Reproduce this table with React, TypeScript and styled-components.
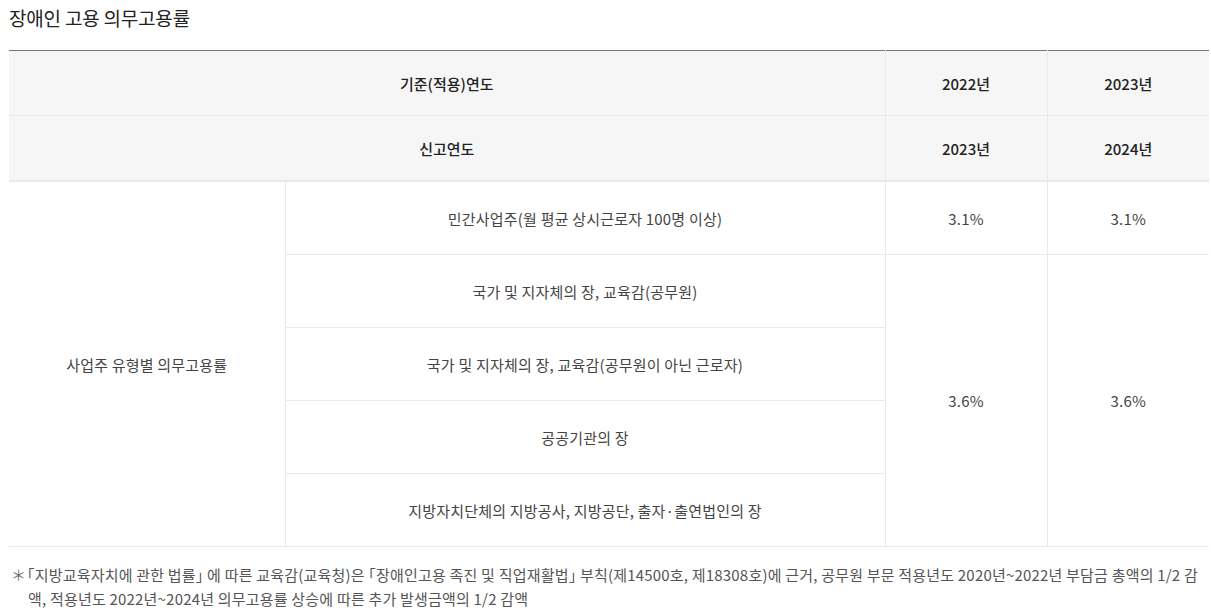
import React from "react";
import styled, { createGlobalStyle } from "styled-components";

const Global = createGlobalStyle`
  html, body { margin: 0; padding: 0; background: #fff; }
  body { font-family: "Noto Sans CJK KR", "Noto Sans", sans-serif; color: #222; }
`;

const Page = styled.div`
  padding: 4px 2px 0 9px;
`;

const Title = styled.h3`
  margin: 0;
  font-size: 19px;
  font-weight: 400;
  line-height: 28px;
  color: #222;
  letter-spacing: -0.2px;
`;

const Table = styled.table`
  margin-top: 18px;
  width: 100%;
  border-collapse: collapse;
  border-top: 1px solid #6b7689;
  border-bottom: 1px solid #cfd3d8;
  table-layout: fixed;
`;

const Th = styled.th<{ $last?: boolean }>`
  background: #f6f6f6;
  height: 64px;
  padding: 0;
  font-size: 15px;
  font-weight: 500;
  color: #222;
  text-align: center;
  border-left: 1px solid #e8ebee;
  border-bottom: ${(p) => (p.$last ? "2px solid #e6e9ed" : "1px solid #e8ebee")};
  &:first-child { border-left: none; }
`;

const Td = styled.td<{ $first?: boolean }>`
  height: 72px;
  padding: 0;
  font-size: 15px;
  font-weight: 400;
  color: #444;
  text-align: center;
  letter-spacing: 0.2px;
  border-left: ${(p) => (p.$first ? "none" : "1px solid #e8ebee")};
  border-bottom: 1px solid #e8ebee;
`;

const Note = styled.p`
  margin: 16px 0 0;
  padding-left: 19px;
  text-indent: -17px;
  font-size: 15px;
  line-height: 24px;
  color: #555;
  letter-spacing: 0.2px;
  font-feature-settings: "halt";
`;

const Star = styled.span`
  display: inline-block;
  width: 16px;
  text-indent: 0;
  color: #777;
`;

export default function App() {
  return (
    <>
      <Global />
      <Page>
        <Title>장애인 고용 의무고용률</Title>
        <Table>
          <colgroup>
            <col style={{ width: 276 }} />
            <col style={{ width: 600 }} />
            <col style={{ width: 162 }} />
            <col style={{ width: 162 }} />
          </colgroup>
          <thead>
            <tr>
              <Th colSpan={2}>기준(적용)연도</Th>
              <Th>2022년</Th>
              <Th>2023년</Th>
            </tr>
            <tr>
              <Th colSpan={2} $last>신고연도</Th>
              <Th $last>2023년</Th>
              <Th $last>2024년</Th>
            </tr>
          </thead>
          <tbody>
            <tr>
              <Td rowSpan={5} $first>사업주 유형별 의무고용률</Td>
              <Td>민간사업주(월 평균 상시근로자 100명 이상)</Td>
              <Td>3.1%</Td>
              <Td>3.1%</Td>
            </tr>
            <tr>
              <Td>국가 및 지자체의 장, 교육감(공무원)</Td>
              <Td rowSpan={4}>3.6%</Td>
              <Td rowSpan={4}>3.6%</Td>
            </tr>
            <tr>
              <Td>국가 및 지자체의 장, 교육감(공무원이 아닌 근로자)</Td>
            </tr>
            <tr>
              <Td>공공기관의 장</Td>
            </tr>
            <tr>
              <Td>지방자치단체의 지방공사, 지방공단, 출자·출연법인의 장</Td>
            </tr>
          </tbody>
        </Table>
        <Note>
          <Star>＊</Star>「지방교육자치에 관한 법률」 에 따른 교육감(교육청)은 「장애인고용 족진 및 직업재활법」 부칙(제14500호, 제18308호)에 근거, 공무원 부문 적용년도 2020년~2022년 부담금 총액의 1/2 감액, 적용년도 2022년~2024년 의무고용률 상승에 따른 추가 발생금액의 1/2 감액
        </Note>
      </Page>
    </>
  );
}
